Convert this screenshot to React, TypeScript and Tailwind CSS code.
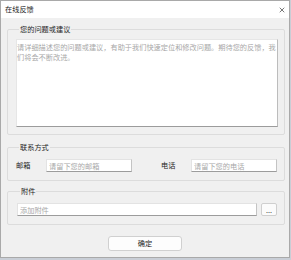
import { X } from "lucide-react";

const font = { fontFamily: '"Noto Sans CJK SC", "Noto Sans", sans-serif' };

const inputCls =
  "h-[13px] bg-white border border-[#e3e3e3] border-b-[#9c9c9c] border-r-[#c4c4c4] px-[2px] text-[7.2px] leading-[11px] text-[#222] placeholder:text-[#a8a8a8] outline-none";

function Group({ title, className, children }: { title: string; className?: string; children: React.ReactNode }) {
  return (
    <fieldset className={`ml-[6px] w-[278px] border border-[#dcdcdc] rounded-[2px] ${className ?? ""}`}>
      <legend className="ml-[3px] px-[1px] text-[7.2px] leading-[9px] text-[#1e1e1e]">{title}</legend>
      {children}
    </fieldset>
  );
}

export default function App() {
  return (
    <div className="w-[291px] h-[260px] bg-[#c9ced6] overflow-hidden" style={font}>
      <div className="w-[290px] h-[258px] border border-[#a9a9a9] bg-[#f0f0f0] flex flex-col">
        <div className="h-[17px] bg-white flex items-center justify-between pl-[4px] pr-[3px] shrink-0">
          <span className="text-[7.2px] leading-[9px] text-[#1a1a1a]">在线反馈</span>
          <X className="w-[8px] h-[8px] text-[#333]" strokeWidth={2} />
        </div>

        <Group title="您的问题或建议" className="mt-[7px] pl-[8px] pr-[6px] pb-[7px]">
          <textarea
            className="mt-[5px] block w-[262px] h-[88px] resize-none bg-white border border-[#e6e6e6] border-b-[#9c9c9c] border-r-[#bcbcbc] px-0 py-[2px] text-[7.2px] leading-[10px] text-[#222] placeholder:text-[#a8a8a8] outline-none"
            placeholder="请详细描述您的问题或建议，有助于我们快速定位和修改问题。期待您的反馈，我们将会不断改进。"
          />
        </Group>

        <Group title="联系方式" className="mt-[8px] pl-[8px] pr-[6px] pb-[8px]">
          <div className="mt-[7px] flex items-center">
            <span className="w-[30px] text-[7.2px] leading-[9px] text-[#1e1e1e]">邮箱</span>
            <input className={`${inputCls} w-[86px]`} placeholder="请留下您的邮箱" />
            <span className="ml-[29px] w-[30px] text-[7.2px] leading-[9px] text-[#1e1e1e]">电话</span>
            <input className={`${inputCls} w-[86px]`} placeholder="请留下您的电话" />
          </div>
        </Group>

        <Group title="附件" className="mt-[6px] pl-[9px] pr-[6px] pb-[8px]">
          <div className="mt-[7px] flex items-center gap-[4px]">
            <input className={`${inputCls} w-[240px]`} placeholder="添加附件" />
            <button className="w-[16px] h-[13px] bg-[#fbfbfb] border border-[#cfcfcf] rounded-[2px] text-[7.2px] leading-[8px] text-[#333]">
              ...
            </button>
          </div>
        </Group>

        <div className="mt-[11px] flex justify-center">
          <button className="w-[74px] h-[15px] bg-[#fdfdfd] border border-[#d0d0d0] rounded-[3px] text-[7.2px] leading-[9px] text-[#1e1e1e]">
            确定
          </button>
        </div>
      </div>
    </div>
  );
}
